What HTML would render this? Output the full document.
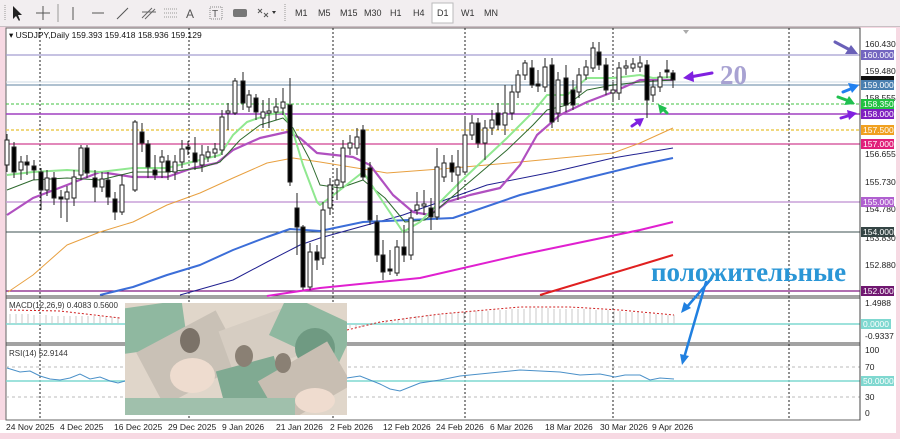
<!DOCTYPE html>
<html><head><meta charset="utf-8"><style>
html,body{margin:0;padding:0;}
body{width:900px;height:439px;background:#f7d9e3;position:relative;overflow:hidden;font-family:"Liberation Sans",sans-serif;}
#tb{position:absolute;left:0;top:0;width:900px;height:26px;background:#f2eef0;border-bottom:1px solid #c8c0c4;}
.tf{position:absolute;top:8px;font-size:9px;color:#333;}
#img{position:absolute;left:125px;top:303px;width:222px;height:112px;overflow:hidden;background:#e0d6ca;}
#img div{position:absolute;}
</style></head><body>
<div id="tb">
<svg width="900" height="26" style="position:absolute;left:0;top:0">
<g stroke="#999" stroke-width="1"><line x1="5" y1="5" x2="5" y2="21" stroke-dasharray="1 1"/><line x1="58" y1="4" x2="58" y2="22"/><line x1="285" y1="4" x2="285" y2="22" stroke-dasharray="1 1"/></g>
<path d="M13 6 L13 19 L16 16 L19 21 L20 20 L18 15 L22 15 Z" fill="#222"/>
<g stroke="#555"><line x1="43" y1="6" x2="43" y2="20"/><line x1="36" y1="13" x2="50" y2="13"/>
<line x1="73" y1="7" x2="73" y2="20"/><line x1="92" y1="13" x2="104" y2="13"/><line x1="117" y1="19" x2="128" y2="8"/></g>
<g stroke="#666" stroke-width="1"><line x1="142" y1="18" x2="152" y2="8"/><line x1="145" y1="19" x2="155" y2="9"/><line x1="142" y1="12" x2="156" y2="12"/></g>
<g stroke="#999" stroke-dasharray="1 1"><line x1="164" y1="9" x2="178" y2="9"/><line x1="164" y1="13" x2="178" y2="13"/><line x1="164" y1="17" x2="178" y2="17"/></g>
<text x="186" y="18" font-size="12" fill="#555" font-family="Liberation Sans">A</text>
<rect x="210" y="7" width="12" height="12" fill="none" stroke="#888" stroke-dasharray="1 1"/><text x="212" y="17" font-size="10" fill="#555">T</text>
<rect x="233" y="9" width="14" height="8" rx="2" fill="#777"/>
<path d="M258 9 l4 4 M262 9 l-4 4 M264 13 l4 4 M268 13 l-4 4" stroke="#555"/><path d="M272 11 l4 0 l-2 3z" fill="#333"/>
<rect x="432" y="3" width="21" height="20" fill="#fff" stroke="#bbb"/>
</svg>
<span class="tf" style="left:295px">M1</span><span class="tf" style="left:318px">M5</span><span class="tf" style="left:340px">M15</span><span class="tf" style="left:364px">M30</span><span class="tf" style="left:390px">H1</span><span class="tf" style="left:413px">H4</span><span class="tf" style="left:437px">D1</span><span class="tf" style="left:461px">W1</span><span class="tf" style="left:484px">MN</span>
</div>

<svg width="900" height="439" style="position:absolute;left:0;top:0">
<rect x="6" y="28" width="854" height="392" fill="#fff"/>
<rect x="860" y="28" width="36" height="405" fill="#fff"/>
<rect x="0" y="420" width="896" height="13" fill="#fff"/>
<rect x="6" y="28" width="854" height="392" fill="none" stroke="#666"/>
<line x1="6" y1="296" x2="860" y2="296" stroke="#444"/><line x1="6" y1="298" x2="860" y2="298" stroke="#444"/>
<line x1="6" y1="343" x2="860" y2="343" stroke="#444"/><line x1="6" y1="345" x2="860" y2="345" stroke="#444"/>
<path d="M683 30 l6 0 l-3 4z" fill="#aaa"/>
<g stroke="#222" stroke-dasharray="2 2"><line x1="40" y1="28" x2="40" y2="420"/><line x1="189" y1="28" x2="189" y2="420"/><line x1="333" y1="28" x2="333" y2="420"/><line x1="465" y1="28" x2="465" y2="420"/><line x1="613" y1="28" x2="613" y2="420"/><line x1="789" y1="28" x2="789" y2="420"/></g>
<line x1="6" y1="55" x2="860" y2="55" stroke="#a49ed0" stroke-width="1.3"/>
<line x1="6" y1="85" x2="860" y2="85" stroke="#7f9cb4" stroke-width="1.2"/>
<line x1="6" y1="82" x2="860" y2="82" stroke="#cfdbe6"/>
<line x1="6" y1="104" x2="860" y2="104" stroke="#40c040" stroke-dasharray="3 2"/>
<line x1="6" y1="114" x2="860" y2="114" stroke="#a040c0" stroke-width="1.4"/>
<line x1="6" y1="130" x2="860" y2="130" stroke="#e6c030" stroke-dasharray="3 2" stroke-width="1.2"/>
<line x1="6" y1="144" x2="860" y2="144" stroke="#d04090" stroke-width="1.3"/>
<line x1="6" y1="202" x2="860" y2="202" stroke="#c8a0d8" stroke-width="1.6"/>
<line x1="6" y1="232" x2="860" y2="232" stroke="#3c5050"/>
<line x1="6" y1="291" x2="860" y2="291" stroke="#801880" stroke-width="1.2"/>
<g fill="none" stroke-linejoin="round">
<polyline stroke="#e8a040" stroke-width="1" points="8,292 33,275 67,245 100,232 133,222 167,205 200,193 233,178 267,163 293,158 320,162 387,173 453,168 520,162 613,153 640,143 673,128"/>
<polyline stroke="#202090" stroke-width="1" points="180,295 233,280 267,262 300,245 320,238 403,215 487,185 553,172 613,158 673,148"/>
<polyline stroke="#3c6ed8" stroke-width="2" points="100,295 133,287 167,275 200,265 233,250 267,237 290,229 320,231 363,222 453,218 520,195 587,178 640,165 673,158"/>
<polyline stroke="#e020d0" stroke-width="2" points="267,296 320,288 420,278 520,255 640,230 673,222"/>
<polyline stroke="#e02020" stroke-width="2" points="540,295 640,265 673,255"/>
<polyline stroke="#b050c0" stroke-width="2.2" points="7,215 33,198 67,185 100,172 133,177 167,177 193,168 217,163 233,150 260,138 287,132 300,138 317,153 353,157 370,165 393,195 413,212 430,215 447,202 470,195 500,188 520,165 537,135 560,115 587,102 613,92 640,80 673,80"/>
<polyline stroke="#2e6a2e" stroke-width="1" points="7,190 33,180 67,178 100,180 133,172 167,172 200,168 220,162 240,140 260,125 283,118 293,128 310,160 320,185 340,188 363,180 385,198 405,222 425,220 460,190 507,150 533,125 547,110 567,105 587,90 613,85 640,82 673,80"/>
<polyline stroke="#90e890" stroke-width="2" points="7,175 33,172 67,170 100,172 133,168 167,168 200,160 220,155 233,135 247,122 267,115 283,112 293,132 303,165 317,202 320,205 340,190 363,172 385,205 403,232 420,222 460,182 507,138 533,112 547,95 567,95 587,78 613,78 640,75 653,78 673,77"/>
</g>
<g stroke="#222" stroke-width="1">
<line x1="7" y1="134" x2="7" y2="172"/><rect x="5" y="140" width="4" height="25" fill="#fff"/>
<line x1="14" y1="142" x2="14" y2="178"/><rect x="12" y="147" width="4" height="25" fill="#000"/>
<line x1="21" y1="156" x2="21" y2="180"/><rect x="19" y="162" width="4" height="8" fill="#fff"/>
<line x1="27" y1="155" x2="27" y2="175"/><rect x="25" y="162" width="4" height="3" fill="#000"/>
<line x1="34" y1="160" x2="34" y2="180"/><rect x="32" y="166" width="4" height="4" fill="#000"/>
<line x1="41" y1="168" x2="41" y2="210"/><rect x="39" y="172" width="4" height="18" fill="#000"/>
<line x1="47" y1="170" x2="47" y2="196"/><rect x="45" y="178" width="4" height="12" fill="#fff"/>
<line x1="54" y1="172" x2="54" y2="205"/><rect x="52" y="178" width="4" height="20" fill="#000"/>
<line x1="61" y1="190" x2="61" y2="218"/><rect x="59" y="197" width="4" height="2" fill="#000"/>
<line x1="67" y1="186" x2="67" y2="222"/><rect x="65" y="192" width="4" height="7" fill="#fff"/>
<line x1="74" y1="170" x2="74" y2="206"/><rect x="72" y="177" width="4" height="21" fill="#fff"/>
<line x1="81" y1="145" x2="81" y2="180"/><rect x="79" y="148" width="4" height="27" fill="#fff"/>
<line x1="87" y1="145" x2="87" y2="178"/><rect x="85" y="148" width="4" height="25" fill="#000"/>
<line x1="95" y1="170" x2="95" y2="202"/><rect x="93" y="178" width="4" height="9" fill="#000"/>
<line x1="102" y1="172" x2="102" y2="192"/><rect x="100" y="179" width="4" height="8" fill="#fff"/>
<line x1="108" y1="172" x2="108" y2="205"/><rect x="106" y="180" width="4" height="17" fill="#000"/>
<line x1="115" y1="192" x2="115" y2="220"/><rect x="113" y="199" width="4" height="13" fill="#000"/>
<line x1="122" y1="175" x2="122" y2="215"/><rect x="120" y="185" width="4" height="27" fill="#fff"/>
<line x1="135" y1="120" x2="135" y2="192"/><rect x="133" y="122" width="4" height="68" fill="#fff"/>
<line x1="142" y1="123" x2="142" y2="152"/><rect x="140" y="132" width="4" height="11" fill="#000"/>
<line x1="148" y1="140" x2="148" y2="178"/><rect x="146" y="144" width="4" height="23" fill="#000"/>
<line x1="155" y1="155" x2="155" y2="180"/><rect x="153" y="170" width="4" height="5" fill="#000"/>
<line x1="162" y1="150" x2="162" y2="178"/><rect x="160" y="157" width="4" height="5" fill="#fff"/>
<line x1="168" y1="155" x2="168" y2="180"/><rect x="166" y="161" width="4" height="11" fill="#000"/>
<line x1="175" y1="155" x2="175" y2="180"/><rect x="173" y="162" width="4" height="10" fill="#fff"/>
<line x1="182" y1="140" x2="182" y2="168"/><rect x="180" y="149" width="4" height="13" fill="#fff"/>
<line x1="188" y1="141" x2="188" y2="155"/><rect x="186" y="147" width="4" height="2" fill="#000"/>
<line x1="195" y1="137" x2="195" y2="170"/><rect x="193" y="153" width="4" height="9" fill="#000"/>
<line x1="202" y1="145" x2="202" y2="172"/><rect x="200" y="155" width="4" height="10" fill="#fff"/>
<line x1="208" y1="146" x2="208" y2="162"/><rect x="206" y="152" width="4" height="5" fill="#fff"/>
<line x1="215" y1="143" x2="215" y2="158"/><rect x="213" y="149" width="4" height="4" fill="#fff"/>
<line x1="222" y1="110" x2="222" y2="155"/><rect x="220" y="117" width="4" height="33" fill="#fff"/>
<line x1="228" y1="103" x2="228" y2="130"/><rect x="226" y="111" width="4" height="2" fill="#fff"/>
<line x1="235" y1="78" x2="235" y2="115"/><rect x="233" y="81" width="4" height="32" fill="#fff"/>
<line x1="243" y1="72" x2="243" y2="110"/><rect x="241" y="81" width="4" height="22" fill="#000"/>
<line x1="249" y1="90" x2="249" y2="112"/><rect x="247" y="95" width="4" height="12" fill="#fff"/>
<line x1="256" y1="94" x2="256" y2="120"/><rect x="254" y="98" width="4" height="14" fill="#000"/>
<line x1="263" y1="100" x2="263" y2="128"/><rect x="261" y="112" width="4" height="6" fill="#fff"/>
<line x1="269" y1="98" x2="269" y2="128"/><rect x="267" y="111" width="4" height="2" fill="#fff"/>
<line x1="276" y1="98" x2="276" y2="120"/><rect x="274" y="107" width="4" height="5" fill="#fff"/>
<line x1="283" y1="88" x2="283" y2="115"/><rect x="281" y="102" width="4" height="6" fill="#fff"/>
<line x1="290" y1="78" x2="290" y2="186"/><rect x="288" y="105" width="4" height="77" fill="#000"/>
<line x1="297" y1="193" x2="297" y2="255"/><rect x="295" y="208" width="4" height="19" fill="#000"/>
<line x1="303" y1="225" x2="303" y2="290"/><rect x="301" y="227" width="4" height="60" fill="#000"/>
<line x1="310" y1="243" x2="310" y2="290"/><rect x="308" y="252" width="4" height="35" fill="#fff"/>
<line x1="317" y1="245" x2="317" y2="270"/><rect x="315" y="252" width="4" height="8" fill="#000"/>
<line x1="323" y1="202" x2="323" y2="265"/><rect x="321" y="210" width="4" height="48" fill="#fff"/>
<line x1="330" y1="178" x2="330" y2="215"/><rect x="328" y="185" width="4" height="23" fill="#fff"/>
<line x1="337" y1="168" x2="337" y2="200"/><rect x="335" y="180" width="4" height="5" fill="#fff"/>
<line x1="343" y1="140" x2="343" y2="188"/><rect x="341" y="148" width="4" height="34" fill="#fff"/>
<line x1="350" y1="135" x2="350" y2="155"/><rect x="348" y="143" width="4" height="5" fill="#fff"/>
<line x1="357" y1="128" x2="357" y2="155"/><rect x="355" y="137" width="4" height="11" fill="#fff"/>
<line x1="363" y1="125" x2="363" y2="180"/><rect x="361" y="130" width="4" height="47" fill="#000"/>
<line x1="370" y1="162" x2="370" y2="225"/><rect x="368" y="168" width="4" height="52" fill="#000"/>
<line x1="377" y1="215" x2="377" y2="262"/><rect x="375" y="222" width="4" height="33" fill="#000"/>
<line x1="383" y1="240" x2="383" y2="280"/><rect x="381" y="255" width="4" height="17" fill="#000"/>
<line x1="390" y1="250" x2="390" y2="275"/><rect x="388" y="269" width="4" height="2" fill="#000"/>
<line x1="397" y1="240" x2="397" y2="276"/><rect x="395" y="247" width="4" height="26" fill="#fff"/>
<line x1="404" y1="225" x2="404" y2="262"/><rect x="402" y="247" width="4" height="8" fill="#000"/>
<line x1="411" y1="210" x2="411" y2="260"/><rect x="409" y="218" width="4" height="37" fill="#fff"/>
<line x1="417" y1="192" x2="417" y2="215"/><rect x="415" y="205" width="4" height="5" fill="#fff"/>
<line x1="424" y1="190" x2="424" y2="215"/><rect x="422" y="204" width="4" height="2" fill="#fff"/>
<line x1="431" y1="198" x2="431" y2="230"/><rect x="429" y="208" width="4" height="9" fill="#000"/>
<line x1="437" y1="148" x2="437" y2="220"/><rect x="435" y="167" width="4" height="50" fill="#fff"/>
<line x1="444" y1="155" x2="444" y2="182"/><rect x="442" y="163" width="4" height="14" fill="#fff"/>
<line x1="452" y1="155" x2="452" y2="182"/><rect x="450" y="163" width="4" height="9" fill="#000"/>
<line x1="458" y1="150" x2="458" y2="200"/><rect x="456" y="167" width="4" height="8" fill="#fff"/>
<line x1="465" y1="118" x2="465" y2="175"/><rect x="463" y="135" width="4" height="37" fill="#fff"/>
<line x1="472" y1="115" x2="472" y2="140"/><rect x="470" y="123" width="4" height="12" fill="#fff"/>
<line x1="478" y1="118" x2="478" y2="148"/><rect x="476" y="123" width="4" height="20" fill="#000"/>
<line x1="485" y1="120" x2="485" y2="160"/><rect x="483" y="128" width="4" height="15" fill="#fff"/>
<line x1="492" y1="110" x2="492" y2="135"/><rect x="490" y="120" width="4" height="8" fill="#fff"/>
<line x1="498" y1="103" x2="498" y2="130"/><rect x="496" y="113" width="4" height="12" fill="#000"/>
<line x1="505" y1="85" x2="505" y2="135"/><rect x="503" y="113" width="4" height="12" fill="#fff"/>
<line x1="512" y1="85" x2="512" y2="120"/><rect x="510" y="92" width="4" height="21" fill="#fff"/>
<line x1="518" y1="70" x2="518" y2="98"/><rect x="516" y="75" width="4" height="17" fill="#fff"/>
<line x1="525" y1="60" x2="525" y2="80"/><rect x="523" y="63" width="4" height="12" fill="#fff"/>
<line x1="532" y1="60" x2="532" y2="88"/><rect x="530" y="68" width="4" height="17" fill="#000"/>
<line x1="538" y1="70" x2="538" y2="92"/><rect x="536" y="84" width="4" height="2" fill="#000"/>
<line x1="545" y1="58" x2="545" y2="92"/><rect x="543" y="67" width="4" height="20" fill="#fff"/>
<line x1="552" y1="58" x2="552" y2="128"/><rect x="550" y="65" width="4" height="57" fill="#000"/>
<line x1="558" y1="72" x2="558" y2="122"/><rect x="556" y="80" width="4" height="33" fill="#fff"/>
<line x1="566" y1="65" x2="566" y2="112"/><rect x="564" y="78" width="4" height="27" fill="#000"/>
<line x1="573" y1="80" x2="573" y2="110"/><rect x="571" y="90" width="4" height="15" fill="#000"/>
<line x1="579" y1="68" x2="579" y2="98"/><rect x="577" y="75" width="4" height="17" fill="#fff"/>
<line x1="586" y1="60" x2="586" y2="80"/><rect x="584" y="67" width="4" height="8" fill="#fff"/>
<line x1="593" y1="42" x2="593" y2="72"/><rect x="591" y="48" width="4" height="20" fill="#fff"/>
<line x1="599" y1="42" x2="599" y2="70"/><rect x="597" y="52" width="4" height="13" fill="#000"/>
<line x1="606" y1="58" x2="606" y2="95"/><rect x="604" y="65" width="4" height="25" fill="#000"/>
<line x1="613" y1="82" x2="613" y2="100"/><rect x="611" y="90" width="4" height="3" fill="#fff"/>
<line x1="619" y1="62" x2="619" y2="100"/><rect x="617" y="68" width="4" height="25" fill="#fff"/>
<line x1="626" y1="60" x2="626" y2="75"/><rect x="624" y="66" width="4" height="2" fill="#fff"/>
<line x1="633" y1="58" x2="633" y2="72"/><rect x="631" y="64" width="4" height="4" fill="#fff"/>
<line x1="640" y1="56" x2="640" y2="72"/><rect x="638" y="63" width="4" height="4" fill="#fff"/>
<line x1="647" y1="60" x2="647" y2="118"/><rect x="645" y="65" width="4" height="35" fill="#000"/>
<line x1="653" y1="80" x2="653" y2="102"/><rect x="651" y="87" width="4" height="8" fill="#fff"/>
<line x1="660" y1="72" x2="660" y2="92"/><rect x="658" y="77" width="4" height="10" fill="#fff"/>
<line x1="667" y1="60" x2="667" y2="78"/><rect x="665" y="70" width="4" height="2" fill="#000"/>
<line x1="673" y1="70" x2="673" y2="88"/><rect x="671" y="73" width="4" height="7" fill="#000"/>
</g>
<text x="9" y="38" font-size="8.5" fill="#111">▾ USDJPY,Daily  159.393 159.418 158.936 159.129</text>
<line x1="6" y1="324" x2="860" y2="324" stroke="#7fd8d0" stroke-width="1.5"/>
<g stroke="#c8c8c8"><path d="M10 324V314M16 324V314M22 324V314M28 324V314M34 324V315M40 324V315M46 324V315M52 324V316M58 324V316M64 324V316M70 324V316M76 324V316M82 324V316M88 324V316M94 324V316M100 324V316M106 324V317M112 324V317M118 324V317M350 324V328M356 324V328M362 324V327M368 324V326M374 324V325M380 324V322M386 324V320M392 324V320M398 324V319M404 324V318M410 324V317M416 324V316M422 324V316M428 324V315M434 324V315M440 324V314M446 324V313M452 324V313M458 324V312M464 324V312M470 324V312M476 324V311M482 324V311M488 324V311M494 324V310M500 324V310M506 324V310M512 324V309M518 324V309M524 324V309M530 324V308M536 324V308M542 324V308M548 324V308M554 324V309M560 324V309M566 324V309M572 324V309M578 324V309M584 324V309M590 324V309M596 324V310M602 324V310M608 324V310M614 324V311M620 324V311M626 324V312M632 324V312M638 324V312M644 324V313M650 324V313M656 324V314M662 324V315M668 324V315M674 324V315"/></g>
<path d="M10 310 L60 311 L120 318 M347 330 L380 322 L440 314 L520 307 L570 307 L620 310 L674 315" fill="none" stroke="#d02020" stroke-dasharray="2 2"/>
<text x="9" y="308" font-size="8" fill="#333">MACD(12,26,9) 0.4083 0.5600</text>
<line x1="6" y1="367" x2="860" y2="367" stroke="#bbb" stroke-dasharray="3 3"/>
<line x1="6" y1="381" x2="860" y2="381" stroke="#7fd8d0" stroke-width="1.5"/>
<line x1="6" y1="397" x2="860" y2="397" stroke="#bbb" stroke-dasharray="3 3"/>
<polyline fill="none" stroke="#4a90c8" points="7,368 20,372 30,371 40,376 50,379 60,380 70,378 80,374 90,379 100,377 110,381 118,383 125,381 347,378 360,376 370,380 380,384 390,389 400,391 410,387 420,383 440,380 460,376 480,374 500,372 520,370 540,371 560,372 580,375 600,374 615,377 625,375 640,375 650,380 660,378 674,379"/>
<text x="9" y="356" font-size="8" fill="#333">RSI(14) 52.9144</text>
<line x1="860" y1="28" x2="860" y2="420" stroke="#444"/>
<g font-size="8.5" fill="#222">
<text x="865" y="47">160.430</text><text x="865" y="74">159.480</text><text x="865" y="101">158.555</text><text x="865" y="157">156.655</text><text x="865" y="185">155.730</text><text x="865" y="212">154.780</text><text x="865" y="241">153.830</text><text x="865" y="268">152.880</text>
<text x="865" y="306">1.4988</text><text x="865" y="339">-0.9337</text>
<text x="865" y="353">100</text><text x="865" y="370">70</text><text x="865" y="400">30</text><text x="865" y="416">0</text>
</g>
<g font-size="8.5" fill="#fff">
<rect x="861" y="50" width="33" height="10" fill="#7366c0"/><text x="863" y="58">160.000</text>
<rect x="861" y="76" width="33" height="4" fill="#111"/>
<rect x="861" y="80" width="33" height="10" fill="#4a7fb0"/><text x="863" y="88">159.000</text>
<rect x="861" y="99" width="33" height="10" fill="#22c040"/><text x="863" y="107">158.350</text>
<rect x="861" y="109" width="33" height="10" fill="#8020c0"/><text x="863" y="117">158.000</text>
<rect x="861" y="125" width="33" height="10" fill="#f0a020"/><text x="863" y="133">157.500</text>
<rect x="861" y="139" width="33" height="10" fill="#e0207a"/><text x="863" y="147">157.000</text>
<rect x="861" y="197" width="33" height="10" fill="#b060d0"/><text x="863" y="205">155.000</text>
<rect x="861" y="227" width="33" height="10" fill="#354545"/><text x="863" y="235">154.000</text>
<rect x="861" y="286" width="33" height="10" fill="#701870"/><text x="863" y="294">152.000</text>
<rect x="861" y="319" width="30" height="10" fill="#7fd8d0"/><text x="863" y="327">0.0000</text>
<rect x="861" y="376" width="33" height="10" fill="#7fd8d0"/><text x="863" y="384">50.0000</text>
</g>
<g font-size="8.5" fill="#222">
<text x="6" y="430">24 Nov 2025</text><text x="60" y="430">4 Dec 2025</text><text x="114" y="430">16 Dec 2025</text><text x="168" y="430">29 Dec 2025</text><text x="222" y="430">9 Jan 2026</text><text x="276" y="430">21 Jan 2026</text><text x="330" y="430">2 Feb 2026</text><text x="383" y="430">12 Feb 2026</text><text x="436" y="430">24 Feb 2026</text><text x="490" y="430">6 Mar 2026</text><text x="545" y="430">18 Mar 2026</text><text x="600" y="430">30 Mar 2026</text><text x="652" y="430">9 Apr 2026</text>
</g>
<text x="720" y="84" font-size="27" font-weight="bold" fill="#a8a2d2" font-family="Liberation Serif">20</text>
<g stroke-linecap="round">
<line x1="712" y1="73" x2="690" y2="77" stroke="#8020e0" stroke-width="3"/><path d="M683 78 L693 71 L694 82Z" fill="#8020e0"/>
<line x1="835" y1="42" x2="852" y2="51" stroke="#6a60b8" stroke-width="3"/><path d="M858 54 L845 54 L851 45Z" fill="#6a60b8"/>
<line x1="843" y1="92" x2="853" y2="88" stroke="#2080f0" stroke-width="3"/><path d="M859 85 L848 83 L852 93Z" fill="#2080f0"/>
<line x1="838" y1="97" x2="849" y2="101" stroke="#20c050" stroke-width="3"/><path d="M855 104 L844 105 L849 96Z" fill="#20c050"/>
<line x1="841" y1="118" x2="851" y2="115" stroke="#8020e0" stroke-width="3"/><path d="M857 113 L847 110 L849 120Z" fill="#8020e0"/>
<line x1="632" y1="126" x2="638" y2="122" stroke="#8020e0" stroke-width="3"/><path d="M644 118 L634 119 L640 127Z" fill="#8020e0"/>
<line x1="667" y1="113" x2="662" y2="108" stroke="#20c050" stroke-width="3"/><path d="M658 104 L660 114 L667 108Z" fill="#20c050"/>
<g stroke="#2080e0" stroke-width="2.5"><line x1="712" y1="278" x2="686" y2="308"/><line x1="706" y1="282" x2="684" y2="358"/></g>
<path d="M681 313 L684 302 L691 308Z" fill="#2080e0"/><path d="M682 365 L680 354 L689 356Z" fill="#2080e0"/>
</g>
<text x="651" y="281" font-size="27" font-weight="bold" fill="#2a96d6" font-family="Liberation Serif">положительные</text>
</svg>

<div id="img">
<div style="left:-10px;top:2px;width:70px;height:45px;background:#8fb8a0;transform:rotate(-8deg)"></div>
<div style="left:20px;top:25px;width:90px;height:60px;background:#c9c1b6;transform:rotate(-28deg)"></div>
<div style="left:45px;top:55px;width:45px;height:35px;background:#eedccf;border-radius:50%"></div>
<div style="left:100px;top:15px;width:70px;height:50px;background:#d6cdc2;transform:rotate(-20deg)"></div>
<div style="left:150px;top:5px;width:75px;height:45px;background:#8fb8a0;transform:rotate(25deg)"></div>
<div style="left:170px;top:25px;width:40px;height:40px;background:#6f9a82;border-radius:50%"></div>
<div style="left:95px;top:60px;width:60px;height:40px;background:#80aa92;transform:rotate(-15deg)"></div>
<div style="left:140px;top:55px;width:80px;height:50px;background:#c8beb2;transform:rotate(-30deg)"></div>
<div style="left:170px;top:85px;width:40px;height:25px;background:#efdccf;border-radius:50%"></div>
<div style="left:0px;top:95px;width:170px;height:17px;background:#a0c0ac"></div>
<div style="left:55px;top:25px;width:20px;height:25px;background:#7b7268;border-radius:50%"></div>
<div style="left:110px;top:42px;width:18px;height:22px;background:#8a8074;border-radius:50%"></div>
<div style="left:150px;top:50px;width:16px;height:20px;background:#8a8074;border-radius:50%"></div>
</div>
</body></html>
